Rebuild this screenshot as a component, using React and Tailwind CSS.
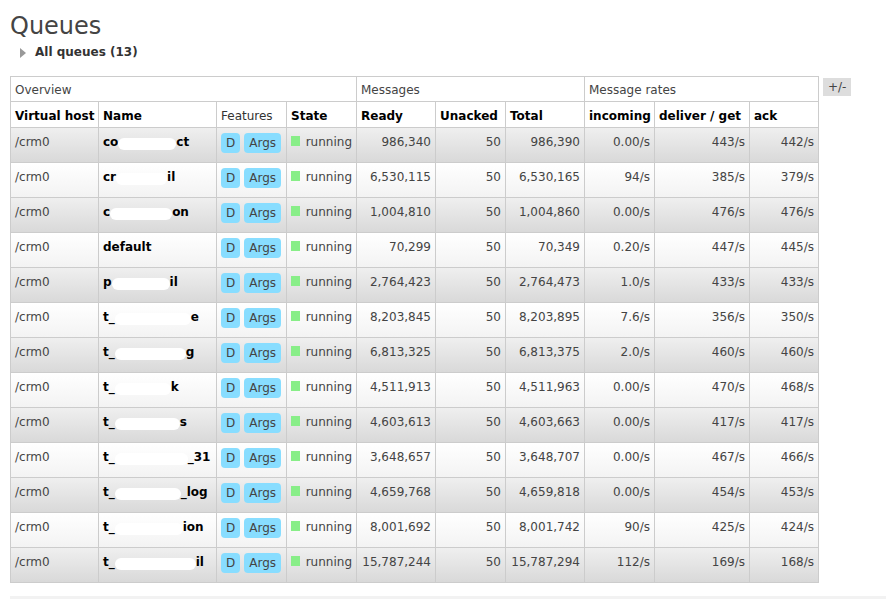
import React from "react";

const rows = [
  { name: [["co"], 58, ["ct"]], v: ["986,340", "50", "986,390", "0.00/s", "443/s", "442/s"] },
  { name: [["cr"], 51, ["il"]], v: ["6,530,115", "50", "6,530,165", "94/s", "385/s", "379/s"] },
  { name: [["c"], 62, ["on"]], v: ["1,004,810", "50", "1,004,860", "0.00/s", "476/s", "476/s"] },
  { name: null, plain: "default", v: ["70,299", "50", "70,349", "0.20/s", "447/s", "445/s"] },
  { name: [["p"], 58, ["il"]], v: ["2,764,423", "50", "2,764,473", "1.0/s", "433/s", "433/s"] },
  { name: [["t_"], 76, ["e"]], v: ["8,203,845", "50", "8,203,895", "7.6/s", "356/s", "350/s"] },
  { name: [["t_"], 71, ["g"]], v: ["6,813,325", "50", "6,813,375", "2.0/s", "460/s", "460/s"] },
  { name: [["t_"], 56, ["k"]], v: ["4,511,913", "50", "4,511,963", "0.00/s", "470/s", "468/s"] },
  { name: [["t_"], 65, ["s"]], v: ["4,603,613", "50", "4,603,663", "0.00/s", "417/s", "417/s"] },
  { name: [["t_"], 73, ["_31"]], v: ["3,648,657", "50", "3,648,707", "0.00/s", "467/s", "466/s"] },
  { name: [["t_"], 66, ["_log"]], v: ["4,659,768", "50", "4,659,818", "0.00/s", "454/s", "453/s"] },
  { name: [["t_"], 68, ["ion"]], v: ["8,001,692", "50", "8,001,742", "90/s", "425/s", "424/s"] },
  { name: [["t_"], 81, ["il"]], v: ["15,787,244", "50", "15,787,294", "112/s", "169/s", "168/s"] },
];

const font = { fontFamily: '"DejaVu Sans", Verdana, sans-serif' };

function Name({ r }) {
  if (!r.name) return <span>{r.plain}</span>;
  const [a, w, b] = r.name;
  return (
    <span className="inline-flex items-center whitespace-nowrap">
      <span>{a[0]}</span>
      <span className="inline-block h-[12px] mt-[3px] rounded-full bg-white" style={{ width: w }} />
      <span>{b[0]}</span>
    </span>
  );
}

export default function App() {
  const cell = "border-r border-b border-[#cccccc] h-[35px] px-[4px]";
  const hcell = "border-r border-b border-[#cccccc] flex items-center px-[4px] bg-white whitespace-nowrap";
  return (
    <div className="bg-white min-h-[599px] pl-[10px] pt-[14px] text-[12px] leading-[15px] text-[#444444]" style={font}>
      <h1 className="text-[24px] leading-[24px] text-[#444444] font-normal">Queues</h1>
      <div className="flex items-center mt-[7px] ml-[10px] gap-[9px]">
        <svg width="6" height="10" viewBox="0 0 6 10"><polygon points="0,0 6,5 0,10" fill="#999999" /></svg>
        <span className="font-bold text-[#333333]">All queues (13)</span>
      </div>
      <div className="flex items-start gap-[4px] mt-[16px]">
        <div className="grid grid-cols-[88px_118px_70px_70px_79px_70px_79px_70px_95px_69px] border-l border-t border-[#cccccc]">
          <div className={`${hcell} col-span-4 h-[25px] pt-[2px]`}>Overview</div>
          <div className={`${hcell} col-span-3 h-[25px] pt-[2px]`}>Messages</div>
          <div className={`${hcell} col-span-3 h-[25px] pt-[2px]`}>Message rates</div>

          <div className={`${hcell} h-[26px] pt-[3px] font-bold text-black`}>Virtual host</div>
          <div className={`${hcell} h-[26px] pt-[3px] font-bold text-black`}>Name</div>
          <div className={`${hcell} h-[26px] pt-[3px] text-[#333333]`}>Features</div>
          <div className={`${hcell} h-[26px] pt-[3px] font-bold text-black`}>State</div>
          <div className={`${hcell} h-[26px] pt-[3px] font-bold text-black`}>Ready</div>
          <div className={`${hcell} h-[26px] pt-[3px] font-bold text-black`}>Unacked</div>
          <div className={`${hcell} h-[26px] pt-[3px] font-bold text-black`}>Total</div>
          <div className={`${hcell} h-[26px] pt-[3px] font-bold text-black`}>incoming</div>
          <div className={`${hcell} h-[26px] pt-[3px] font-bold text-black`}>deliver / get</div>
          <div className={`${hcell} h-[26px] pt-[3px] font-bold text-black`}>ack</div>

          {rows.map((r, i) => {
            const bg = i % 2 === 0 ? "bg-linear-to-b from-[#efefef] to-[#d9d9d9]" : "bg-linear-to-b from-[#ffffff] to-[#f3f3f3]";
            return (
              <React.Fragment key={i}>
                <div className={`${cell} ${bg} pt-[7px]`}>/crm0</div>
                <div className={`${cell} ${bg} pt-[7px] font-bold text-black`}><Name r={r} /></div>
                <div className={`${cell} ${bg} pt-[5px] flex items-start gap-[4px]`}>
                  <span className="h-[20px] leading-[20px] px-[5px] rounded-[4px] bg-[#88ddff] text-[#444444]">D</span>
                  <span className="h-[20px] leading-[20px] px-[5px] rounded-[4px] bg-[#88ddff] text-[#444444]">Args</span>
                </div>
                <div className={`${cell} ${bg} pt-[7px] flex items-start gap-[6px]`}>
                  <span className="w-[10px] h-[10px] mt-[1px] bg-[#88ee88]" />
                  <span>running</span>
                </div>
                {r.v.map((x, j) => (
                  <div key={j} className={`${cell} ${bg} pt-[7px] text-right whitespace-nowrap`}>{x}</div>
                ))}
              </React.Fragment>
            );
          })}
        </div>
        <div className="mt-[2px] h-[18px] leading-[18px] px-[5px] bg-[#dddddd] text-[#444444]">+/-</div>
      </div>
      <div className="mt-[13px] h-[10px] bg-[#f2f2f2]" />
    </div>
  );
}
